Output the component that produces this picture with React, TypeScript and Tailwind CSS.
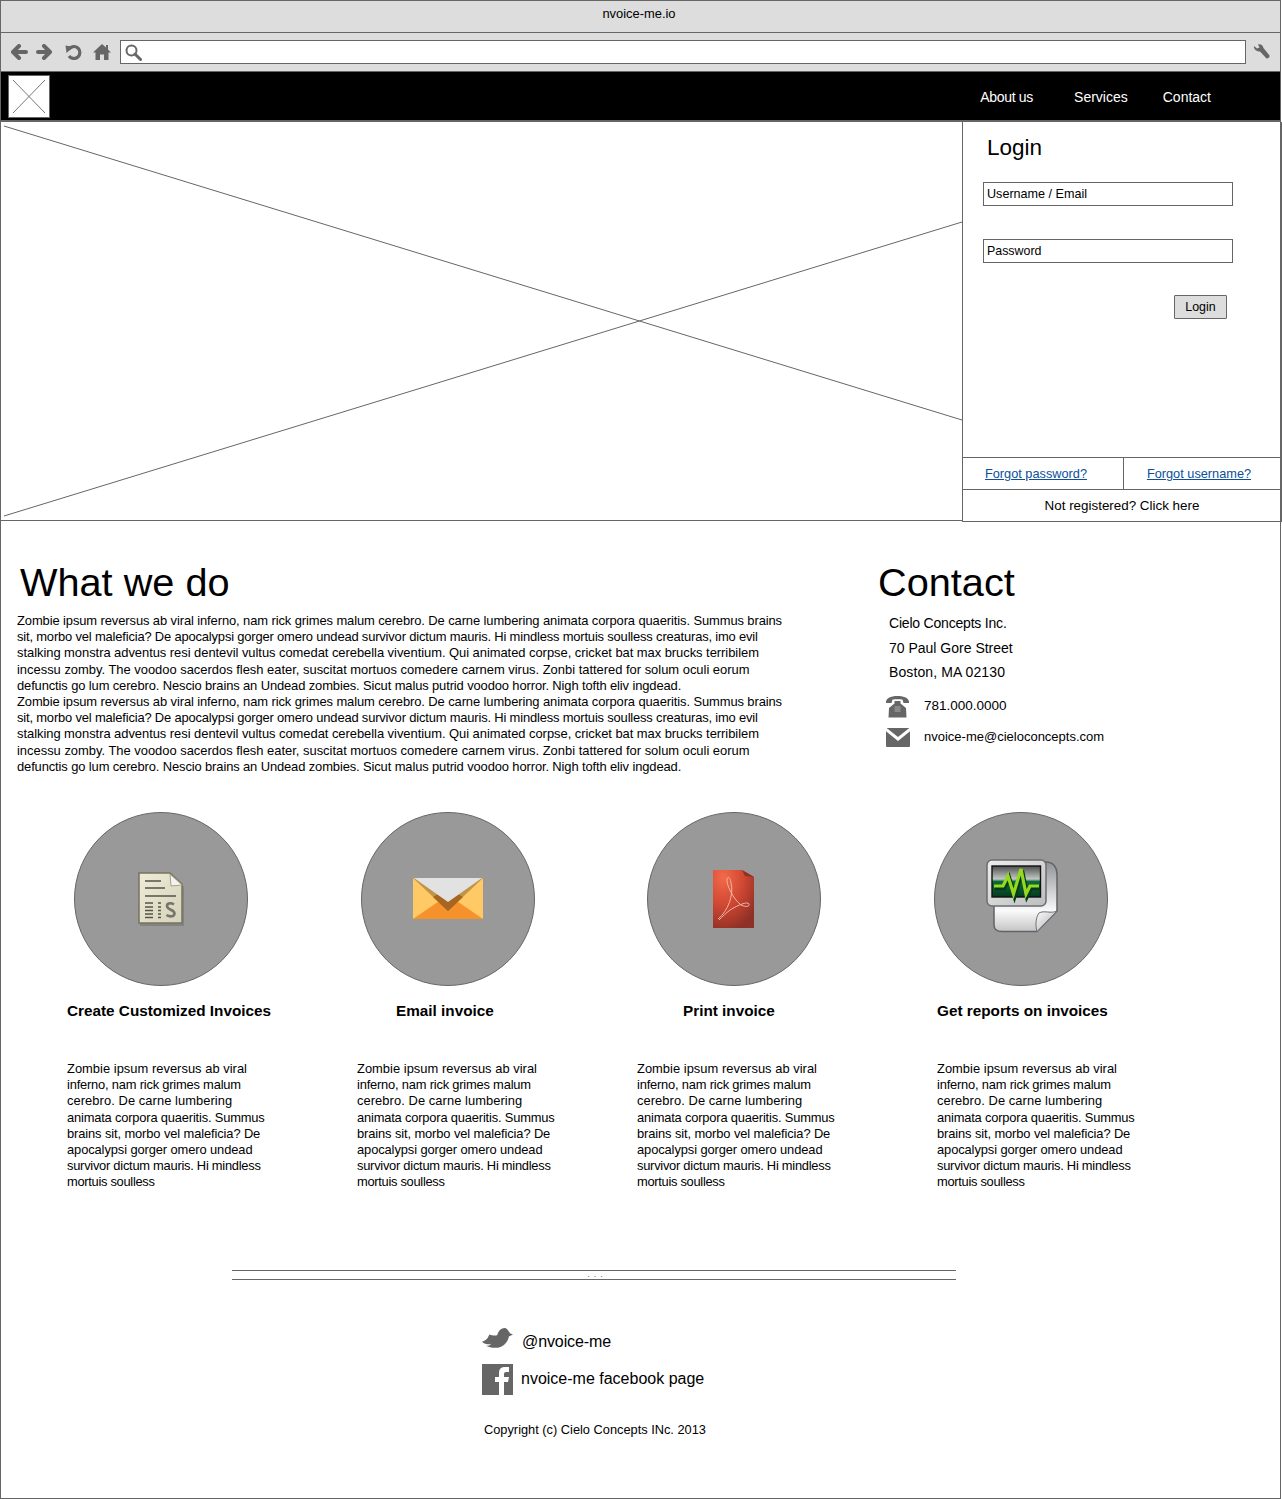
const F = "font-['Liberation_Sans',sans-serif]";

const para: [string, string][] = [
  ["Zombie ipsum reversus ab viral inferno, nam rick grimes malum cerebro. De carne lumbering animata corpora quaeritis. Summus brains", "tracking-[-0.1px]"],
  ["sit, morbo vel maleficia? De apocalypsi gorger omero undead survivor dictum mauris. Hi mindless mortuis soulless creaturas, imo evil", "tracking-[-0.173px]"],
  ["stalking monstra adventus resi dentevil vultus comedat cerebella viventium. Qui animated corpse, cricket bat max brucks terribilem", "tracking-[-0.04px]"],
  ["incessu zomby. The voodoo sacerdos flesh eater, suscitat mortuos comedere carnem virus. Zonbi tattered for solum oculi eorum", "tracking-[-0.01px]"],
  ["defunctis go lum cerebro. Nescio brains an Undead zombies. Sicut malus putrid voodoo horror. Nigh tofth eliv ingdead.", "tracking-[-0.12px]"],
];
const blurb: [string, string][] = [
  ["Zombie ipsum reversus ab viral", "tracking-[0.03px]"],
  ["inferno, nam rick grimes malum", "tracking-[-0.2px]"],
  ["cerebro. De carne lumbering", "tracking-[0.07px]"],
  ["animata corpora quaeritis. Summus", "tracking-[-0.18px]"],
  ["brains sit, morbo vel maleficia? De", "tracking-[-0.11px]"],
  ["apocalypsi gorger omero undead", "tracking-[-0.1px]"],
  ["survivor dictum mauris. Hi mindless", "tracking-[-0.26px]"],
  ["mortuis soulless", "tracking-[-0.3px]"],
];

function Lines({ lines }: { lines: [string, string][] }) {
  return (
    <>
      {lines.map(([l, t], i) => (
        <div key={i} className={`whitespace-nowrap ${t}`}>{l}</div>
      ))}
    </>
  );
}

const Invoice = () => (
  <svg width="47" height="55" viewBox="0 0 47 55">
    <defs>
      <linearGradient id="ig" x1="0" y1="0" x2="1" y2="1">
        <stop offset="0" stopColor="#eeebd8" />
        <stop offset="1" stopColor="#d6d3bb" />
      </linearGradient>
    </defs>
    <path d="M1 3H32L45 15V54H1Z" fill="#6f6f66" opacity=".5" transform="translate(1 0)" />
    <path d="M1 1H32L44 12V51H1Z" fill="url(#ig)" stroke="#77735f" strokeWidth="1.5" />
    <path d="M32 2L44 13L33 14Z" fill="#f4f4ee" stroke="#a5a28c" />
    <path d="M7 9H23M7 16H27M7 24H38" stroke="#55534a" strokeWidth="1.4" />
    <path d="M7 31H15M7 35H15M7 38.500H15M7 42H15M7 45.500H15M20 31H23M20 35H23M20 38.500H23M20 42H23M20 45.500H23" stroke="#55534a" strokeWidth="1.3" />
    <path d="M36 32.500C33 30.500 29 31 29 34C29 38 36.500 37.500 36.500 41.500C36.500 45 31.500 45 28.500 43" fill="none" stroke="#77756a" strokeWidth="2.600" />
  </svg>
);

const Envelope = () => (
  <svg width="70" height="42" viewBox="0 0 70 42">
    <rect width="70" height="41" x="0" y="0" rx="1" fill="#ffc966" />
    <path d="M0 41L35 17L70 41Z" fill="#f6922b" />
    <path d="M0 0L35 33L70 0Z" fill="#8e6a2b" opacity=".55" />
    <path d="M20 19L35 33L50 19L35 10Z" fill="#a8651f" />
    <path d="M1 0H69L35 24Z" fill="#e2e2e2" />
  </svg>
);

const Pdf = () => (
  <svg width="44" height="60" viewBox="0 0 44 60">
    <defs>
      <radialGradient id="pdfg" cx="25%" cy="12%" r="95%">
        <stop offset="0" stopColor="#f4694a" />
        <stop offset=".55" stopColor="#cc4631" />
        <stop offset="1" stopColor="#8f3026" />
      </radialGradient>
    </defs>
    <path d="M1 1H30L42 8V59H1Z" fill="url(#pdfg)" />
    <path d="M30 1L42 8L33 7Z" fill="#8f3026" />
    <path d="M6 50C16 42 22 26 19 14C18 8 16 7 15 10C14 15 21 30 29 36C33 38 38 38 37 35C36 32 26 36 18 41C14 44 10 48 7 51" fill="none" stroke="#f2b6a5" strokeWidth="1" />
  </svg>
);

const Reports = () => (
  <svg width="73" height="75" viewBox="0 0 73 75">
    <defs>
      <linearGradient id="pg" x1="0" y1="0" x2="0" y2="1">
        <stop offset="0" stopColor="#8f9296" />
        <stop offset=".7" stopColor="#fafafa" />
        <stop offset="1" stopColor="#c4c4c4" />
      </linearGradient>
      <linearGradient id="fg" x1="0" y1="0" x2="1" y2="1">
        <stop offset="0" stopColor="#eeeeee" />
        <stop offset="1" stopColor="#bdbdbd" />
      </linearGradient>
      <linearGradient id="cg" x1="0" y1="0" x2="1" y2="1">
        <stop offset="0" stopColor="#ffffff" />
        <stop offset="1" stopColor="#a8a8a8" />
      </linearGradient>
      <linearGradient id="sg" x1="0" y1="0" x2="0" y2="1">
        <stop offset="0" stopColor="#4c504c" />
        <stop offset=".42" stopColor="#c4c8c4" />
        <stop offset=".5" stopColor="#0c6a39" />
        <stop offset="1" stopColor="#053a20" />
      </linearGradient>
    </defs>
    <path d="M8 3H60C67 3 71 8 71 15V52L51 72.500H16C10 72.500 8 70 8 66Z" fill="url(#pg)" stroke="#5f6468" strokeWidth="1.5" />
    <path d="M51 72.500C49 66 50 58 53 54C58 51 65 55 71 52Z" fill="url(#cg)" stroke="#6c7074" />
    <rect x="1" y="1" width="59" height="46" rx="5" fill="url(#fg)" stroke="#6a6e72" strokeWidth="1.5" />
    <rect x="6" y="7" width="48.500" height="31" fill="url(#sg)" stroke="#111" strokeWidth="1.4" />
    <path d="M8 28H17L22 18L27.500 36L35 11L40 36L44 28H53" fill="none" stroke="#053a20" strokeWidth="4.400" transform="translate(1 1)" />
    <path d="M8 27H17L22 17L27.500 35L35 10L40 35L44 27H53" fill="none" stroke="#96d81c" strokeWidth="3.200" />
  </svg>
);

const Feature = ({ cls, circle, head, title, icon }: { cls: string; circle: string; head: string; title: string; icon: React.ReactNode }) => (
  <div className={cls}>
    <div className={`${circle} flex h-[174px] w-[174px] items-center justify-center rounded-full border border-[#666] bg-[#999]`}>{icon}</div>
    <div className={`${head} mt-[15px] whitespace-nowrap text-[15.3px] font-bold leading-[20px] text-black`}>{title}</div>
    <div className="mt-[40px] text-[12.9px] leading-[16.15px] text-black"><Lines lines={blurb} /></div>
  </div>
);

export default function App() {
  return (
    <div className={`${F} flex h-[1499px] w-[1281px] flex-col border border-[#666] bg-white text-black`}>
      {/* title */}
      <div className="flex h-[32px] shrink-0 items-start justify-center border-b border-[#666] bg-[#ddd] pt-[5px] pr-[3px] text-[12.9px] leading-[16px]">nvoice-me.io</div>
      {/* toolbar */}
      <div className="flex h-[38px] shrink-0 items-center bg-[#ddd] pl-[9px] pr-[10px]">
        <svg width="18" height="16" viewBox="0 0 18 16" className="mr-[8px]"><path d="M16 8H4M9 2L3 8L9 14" fill="none" stroke="#666" strokeWidth="4" strokeLinejoin="round" strokeLinecap="round" /></svg>
        <svg width="17" height="16" viewBox="0 0 17 16" className="mr-[12px]"><path d="M2 8H13M8 2L14 8L8 14" fill="none" stroke="#666" strokeWidth="4" strokeLinejoin="round" strokeLinecap="round" /></svg>
        <svg width="17" height="16" viewBox="0 0 17 16" className="mr-[11px]"><path d="M4 5A6 6 0 1 1 4 12" fill="none" stroke="#666" strokeWidth="3.200" /><path d="M0.500 1.500L8.500 3L1.500 9Z" fill="#666" /></svg>
        <svg width="18" height="16" viewBox="0 0 18 16" className="mr-[9px]"><path d="M9 0L13 3.500V1H15V5.500L18 8.500H15.500V16H11V10.500H7V16H2.500V8.500H0Z" fill="#666" /></svg>
        <div className="flex h-[24px] min-w-0 flex-1 items-center border border-[#666] bg-white pl-[4px]">
          <svg width="17" height="17" viewBox="0 0 17 17"><circle cx="6.500" cy="6.500" r="5" fill="#fff" stroke="#666" strokeWidth="2" /><path d="M10 10L15.500 15.500" stroke="#666" strokeWidth="3" strokeLinecap="round" /></svg>
        </div>
        <svg width="17" height="16" viewBox="0 0 17 16" className="ml-[7px]"><path d="M1 2L4 4.500L6.500 3.500L5 0.500C7.500-.3 10 1 10.500 4L16.500 11.500C17 13 15 15 13.500 14.500L7 7.500C4 7.500 .5 5.500 1 2Z" fill="#666" /></svg>
      </div>
      {/* nav */}
      <div className="flex h-[51px] shrink-0 items-center justify-between border-b-2 border-[#666] border-t border-t-[#666] bg-black">
        <div className="ml-[7px] h-[43px] w-[42px] border border-[#666] bg-white p-[4px]">
          <svg width="32" height="33" viewBox="0 0 32 33" className="block"><path d="M0 0L32 33M32 0L0 33" stroke="#777" strokeWidth="1" /></svg>
        </div>
        <div className="mt-[1px] flex items-center pr-[69px] text-[14px] leading-[20px] text-white">
          <span className="mr-[41px] tracking-[-0.3px]">About us</span>
          <span className="mr-[35px]">Services</span>
          <span>Contact</span>
        </div>
      </div>
      {/* hero */}
      <div className="flex h-[398px] shrink-0">
        <div className="w-[961px] shrink-0">
          <svg width="961" height="398" viewBox="0 0 961 398" className="block">
            <path d="M3 4L961 298M3 394L961 100" stroke="#666" strokeWidth="1" fill="none" />
          </svg>
        </div>
        <div className="flex h-[400px] w-[320px] shrink-0 flex-col border-x border-[#666]">
          <div className="flex-1 px-[20px]">
            <div className="ml-[4px] mt-[10px] text-[22.5px] leading-[32px]">Login</div>
            <div className="mt-[18px] flex h-[24px] w-[250px] items-center border border-[#666] pl-[3px] text-[12.6px]">Username / Email</div>
            <div className="mt-[33px] flex h-[24px] w-[250px] items-center border border-[#666] pl-[3px] text-[12.4px]">Password</div>
            <div className="ml-[191px] mt-[32px] flex h-[24px] w-[53px] items-center justify-center rounded-[1px] border border-[#666] bg-[#ddd] text-[12.4px]">Login</div>
          </div>
          <div className="flex h-[32px] border-t border-[#666] text-[12.75px]">
            <div className="flex w-[160px] items-center justify-center pr-[14px] text-[#0b4f9a] underline">Forgot password?</div>
            <div className="flex flex-1 items-center justify-center border-l border-[#666] pr-[7px] text-[#0b4f9a] underline">Forgot username?</div>
          </div>
          <div className="flex h-[33px] items-center justify-center border-y border-[#666] pt-[1px] text-[13.4px]">Not registered? Click here</div>
        </div>
      </div>
      <div className="mr-[318px] h-0 shrink-0 border-t border-[#666]" />
      {/* what we do + contact */}
      <div className="flex shrink-0 pt-[39px]">
        <div className="ml-[16px] w-[860px]">
          <div className="ml-[3px] text-[39.7px] leading-[45px]">What we do</div>
          <div className="mt-[8px] text-[12.95px] leading-[16.2px]">
            <Lines lines={para} />
            <Lines lines={para} />
          </div>
        </div>
        <div>
          <div className="ml-[1px] text-[39.7px] leading-[45px]">Contact</div>
          <div className="ml-[12px] mt-[6px] text-[14px] leading-[24.5px]">
            <div className="tracking-[-0.2px]">Cielo Concepts Inc.</div>
            <div>70 Paul Gore Street</div>
            <div className="tracking-[0.1px]">Boston, MA 02130</div>
          </div>
          <div className="ml-[9px] mt-[10px] flex h-[24px] items-center text-[13.5px]">
            <svg width="23" height="22" viewBox="0 0 23 22" className="mr-[15px]">
              <path d="M0 7C-.5 1.500 6 0 11.500 0C17 0 23.500 1.500 23 7H17.500L16.500 3.500C14 3 9 3 6.500 3.500L5.500 7Z" fill="#666" />
              <path d="M8.500 5H14.500V7.500L20 12L20.500 21.500H2.500L3 12L8.500 7.500Z" fill="#666" />
              <rect x="8.500" y="10" width="6" height="6" fill="#8a8a8a" />
            </svg>
            <span>781.000.0000</span>
          </div>
          <div className="ml-[9px] mt-[7px] flex h-[22px] items-center text-[13px]">
            <svg width="24" height="20" viewBox="0 0 24 20" className="mr-[14px]">
              <rect y="1" width="24" height="19" rx="1" fill="#666" />
              <path d="M-1 1.500L12 12L25 1.500" fill="none" stroke="#fff" strokeWidth="3" />
            </svg>
            <span>nvoice-me@cieloconcepts.com</span>
          </div>
        </div>
      </div>
      {/* features */}
      <div className="mt-[37px] flex shrink-0 pl-[66px]">
        <Feature cls="w-[290px]" circle="ml-[7px]" head="" title="Create Customized Invoices" icon={<Invoice />} />
        <Feature cls="w-[280px]" circle="ml-[4px]" head="ml-[39px]" title="Email invoice" icon={<Envelope />} />
        <Feature cls="w-[300px]" circle="ml-[10px]" head="ml-[46px]" title="Print invoice" icon={<Pdf />} />
        <Feature cls="w-[290px]" circle="ml-[-3px]" head="" title="Get reports on invoices" icon={<div className="mb-[5px] ml-[2px]"><Reports /></div>} />
      </div>
      {/* divider */}
      <div className="ml-[231px] mt-[80px] flex h-[10px] w-[724px] shrink-0 items-center justify-center border-y border-[#666]">
        <span className="mb-[3px] ml-[6px] text-[9px] leading-[8px] tracking-[4px] text-[#666]">...</span>
      </div>
      {/* social */}
      <div className="ml-[481px] mt-[47px] flex shrink-0 items-start">
        <svg width="31" height="22" viewBox="0 0 30 21" className="mr-[9px]">
          <path d="M0 14C4 13 6 10 7 7C10 8 14 9 15 7C16 3 20 0 23 1C25 2 26 4 27 6L30 7L26 9C25 15 20 20 13 20C9 20 6 19 4 18C7 18 8 17 9 16C6 17 2 17 0 14Z" fill="#666" />
        </svg>
        <span className="mt-[4px] text-[16px] leading-[22px] tracking-[-0.1px]">@nvoice-me</span>
      </div>
      <div className="ml-[481px] mt-[11px] flex shrink-0 items-center">
        <svg width="31" height="31" viewBox="0 0 31 31" className="mr-[8px]">
          <rect width="31" height="31" fill="#666" />
          <path d="M17 31V18H13V13H17V9C17 5 19 3 23 3H27V8H24C22.500 8 22 9 22 10V13H27L26 18H22V31Z" fill="#fff" />
        </svg>
        <span className="mb-[2px] text-[16px] leading-[22px]">nvoice-me facebook page</span>
      </div>
      <div className="ml-[483px] mt-[25px] shrink-0 text-[12.8px] leading-[20px]">Copyright (c) Cielo Concepts INc. 2013</div>
    </div>
  );
}
